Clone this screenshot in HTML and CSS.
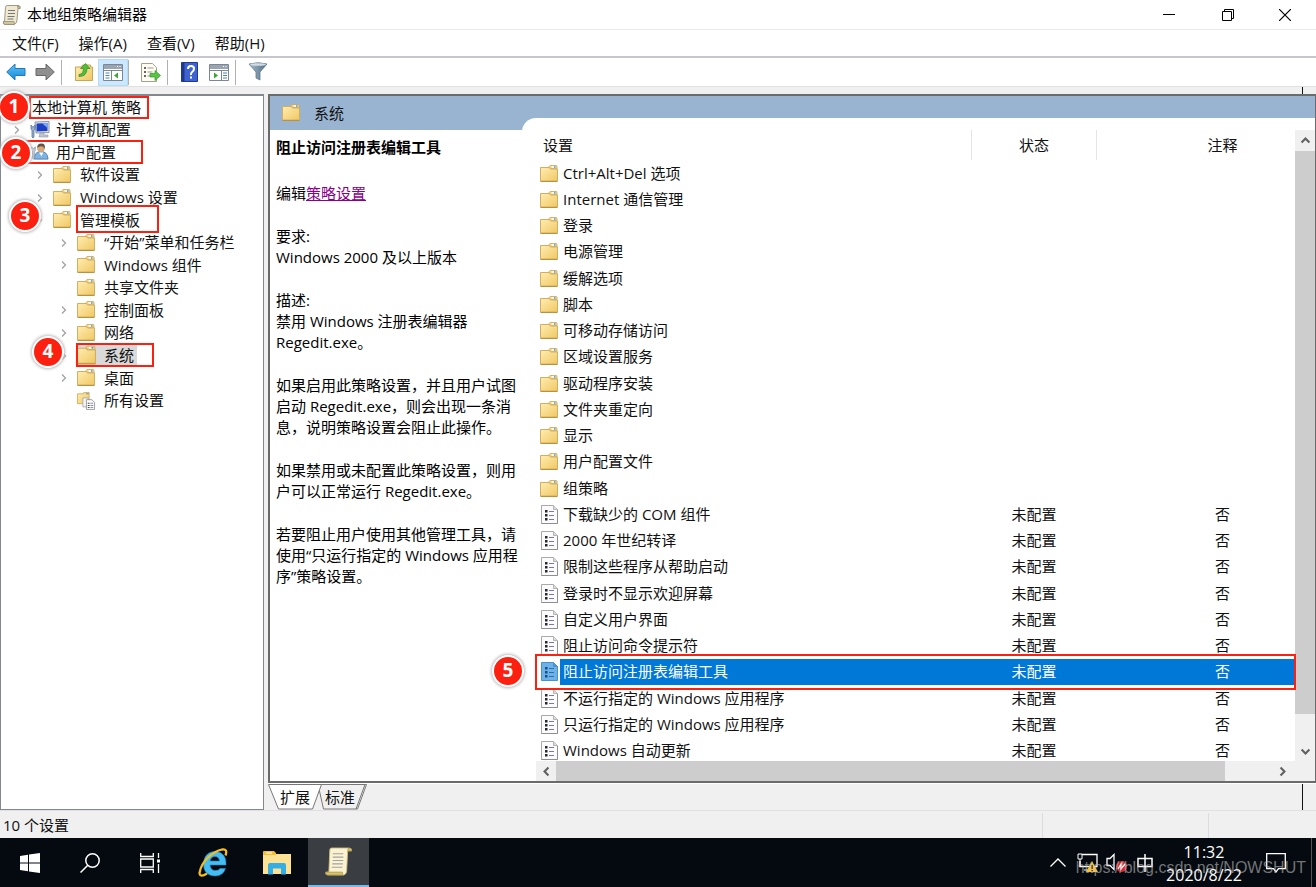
FILE: index.html
```html
<!DOCTYPE html>
<html lang="zh-CN">
<head>
<meta charset="utf-8">
<title>本地组策略编辑器</title>
<link rel="stylesheet" href="styles.css">
</head>
<body>
<svg class="defs" aria-hidden="true">
  <defs>
    <linearGradient id="gold" x1="0" y1="0" x2="1" y2="1"><stop offset="0" stop-color="#ffedb0"/><stop offset="1" stop-color="#f0c864"/></linearGradient>
    <linearGradient id="blue" x1="0" y1="0" x2="0" y2="1"><stop offset="0" stop-color="#5cc4f8"/><stop offset="1" stop-color="#1487d8"/></linearGradient>
    <linearGradient id="steel" x1="0" y1="0" x2="1" y2="0"><stop offset="0" stop-color="#a9bccb"/><stop offset="1" stop-color="#4f6b82"/></linearGradient>
  </defs>
  <symbol id="folder" viewBox="0 0 18 18">
    <path d="M9 3V1.500l1-1h6.500l.5 1V4z" fill="#f3d78b" stroke="#c9a657" stroke-width=".8"/>
    <path d="M11.500 2h4" stroke="#fff" stroke-width="1.600"/><path d="M14 2h1.500" stroke="#4a8fd0" stroke-width="1.600"/>
    <path d="M.5 2.500h8.500l1.500 1.500h7v12H.5z" fill="url(#gold)" stroke="#d2ae61"/>
    <path d="M.5 16.500h17" stroke="#b89143"/>
  </symbol>
  <symbol id="setting" viewBox="0 0 17 19">
    <path class="paper" d="M.5.500h12l4 4v14H.5z" stroke="#a9a9a9"/>
    <path d="M12.500.500v4h4" fill="#ddd" stroke="#b5b5b5"/>
    <path d="M.5 18.500h16V5" fill="none" stroke="#8e8e8e"/>
    <path d="M4 5h2.500v2.500H4zM4 9h2.500v2.500H4zM4 13h2.500v2.500H4z" fill="#26262c"/>
    <path d="M8 6.500h5M8 10.500h5M8 14.500h5" stroke="#7a78a8" stroke-width="1.200"/>
  </symbol>
  <symbol id="setting-sel" viewBox="0 0 17 19">
    <path d="M.5.500h12l4 4v14H.5z" fill="#6db1e6" stroke="#4a90cc"/>
    <path d="M12.500.500v4h4" fill="#4c97d6" stroke="#4a90cc"/>
    <path d="M4 5h2.500v2.500H4zM4 9h2.500v2.500H4zM4 13h2.500v2.500H4z" fill="#124f88"/>
    <path d="M8 6.500h5M8 10.500h5M8 14.500h5" stroke="#2a6db0" stroke-width="1.200"/>
  </symbol>
  <symbol id="scroll" viewBox="0 0 28 30">
    <path d="M5 3q0-2 2-2h18q3 0 2.500 3h-4l-1 20q0 4-3 5H3q-3 0-2-3h3z" fill="#fbf3cf" stroke="#c9bb80" stroke-width=".9"/>
    <path d="M24 1.500q4-.5 3.500 2.500h-4zM1 26h17q1 2 0 3H3q-3 0-2-3z" fill="#d9c36c" stroke="#a8913f" stroke-width=".7"/>
    <path d="M8 7h11M8 10.500h11M8 14h11M7.500 17.500h11M7 21h11" stroke="#a3a1a8" stroke-width="1.200"/>
  </symbol>
  <symbol id="scroll-small" viewBox="0 0 19 20">
    <path d="M3.500 2.500q0-2 2-2H17q1.500.5 1 3h-2L15 15q0 3-2.500 4.500H3q-2.500-.5-1.500-3h1z" fill="#efe9d2" stroke="#a09a84"/>
    <path d="M15.500 1q3-.5 2.500 2.500h-2zM1.500 16.500H12q1 1.500 0 3H3q-2.500-.5-1.500-3z" fill="#cfc49c" stroke="#8f886e" stroke-width=".7"/>
    <path d="M6 5.500h7M6 8.500h7M5.500 11.500h7M5.500 14h6" stroke="#77747a" stroke-width="1.100"/>
  </symbol>
  <symbol id="computer" viewBox="0 0 20 18">
    <path d="M5 1l14-.5v11L6 12z" fill="#e4e8ef" stroke="#8b93a3"/>
    <path d="M6.500 2.500l11-.5v8l-11 .5z" fill="#1d3fc4"/><path d="M12 2.200l5.500-.2v5z" fill="#7fa8f4"/>
    <path d="M10 12h4v2h4v2H9z" fill="#bfc6d2" stroke="#8b93a3" stroke-width=".6"/>
    <path d="M1 4q1 2 2 2t2-2v4L4 9v7q-1 2-2 0V9L1 8z" fill="#98b1cf" stroke="#4c6c96" stroke-width=".7"/>
  </symbol>
  <symbol id="user" viewBox="0 0 20 19">
    <path d="M4 17q0-8 7-8t7.500 8z" fill="#7fb3e3" stroke="#4f81b4"/>
    <path d="M9 10l2.500 4 2-4z" fill="#fff"/>
    <circle cx="11" cy="5.500" r="4" fill="#d9a878"/><path d="M7 5q0-4.500 4.500-4.500T15 6q-2-3-4-2.500T7 5z" fill="#655042"/>
    <path d="M1 4q1 2 2 2t2-2v4L4 9v7q-1 2-2 0V9L1 8z" fill="#c7d3e2" stroke="#6e86a5" stroke-width=".7"/>
  </symbol>
  <symbol id="allset" viewBox="0 0 20 20">
    <path d="M.5 2h7V.5h6V13H.5z" fill="url(#gold)" stroke="#d2ae61"/><path d="M10 2h3" stroke="#4a8fd0"/>
    <path d="M6.500 6.500h6v10h-6z" fill="#f4f4f4" stroke="#a9a9a9"/>
    <path d="M10.500 8.500h6l3 3v8h-9z" fill="#fbfbfb" stroke="#999"/>
    <path d="M12 12.500h2M12 15h2M12 17.300h2" stroke="#333"/><path d="M15 12.500h3M15 15h3M15 17.300h3" stroke="#7a78a8"/>
  </symbol>
  <symbol id="chev" viewBox="0 0 6 10"><path d="M1 1.500L4.500 5 1 8.500" fill="none" stroke="#a2a2a2" stroke-width="1.300"/></symbol>
  <symbol id="arrow" viewBox="0 0 10 10"><path d="M2 6.500l3-3 3 3" fill="none" stroke="#606060" stroke-width="1.600"/></symbol>
</svg>

<main class="window">
  <header class="titlebar">
    <svg class="app-icon"><use href="#scroll-small"/></svg>
    <h1>本地组策略编辑器</h1>
    <button class="win-btn" aria-label="最小化"><svg width="12" height="12"><path d="M0 5.500h12" stroke="#000"/></svg></button>
    <button class="win-btn" aria-label="还原"><svg width="12" height="12"><path d="M.5 2.500h9v9h-9zM2.500 2V.5h9v9H10" fill="none" stroke="#000"/></svg></button>
    <button class="win-btn" aria-label="关闭"><svg width="12" height="12"><path d="M0 0l12 12M12 0L0 12" stroke="#000" stroke-width="1.200"/></svg></button>
  </header>

  <nav class="menubar">
    <button>文件(F)</button><button>操作(A)</button><button>查看(V)</button><button>帮助(H)</button>
  </nav>

  <div class="toolbar" role="toolbar">
    <button aria-label="后退"><svg width="20" height="18"><path d="M.7 9L9 1v4.500h10v7H9V17z" fill="url(#blue)" stroke="#2478b5"/></svg></button>
    <button aria-label="前进"><svg width="20" height="18"><path d="M19.300 9L11 1v4.500H1v7h10V17z" fill="#909090" stroke="#686868"/></svg></button>
    <i class="sep"></i>
    <button aria-label="上移"><svg width="18" height="18"><path d="M.5 4h6l1-2h8v2h2v13.500H.5z" fill="url(#gold)" stroke="#c9a657"/><path d="M4 11.500q4.500-.5 4.500-6H5.500L10.500.5l4.500 5h-3q0 8-8 8z" fill="#4fbf3a" stroke="#2e8b22" stroke-width=".7"/></svg></button>
    <button class="on" aria-label="显示树"><svg width="20" height="17"><path d="M.5.500h19v16H.5z" fill="#fff" stroke="#7b8794"/><path d="M1 1h18v4H1z" fill="#9aa5b1"/><path d="M14 2.500h1M16.500 2.500h1" stroke="#fff"/><path d="M1 6.500h18M8.500 7v9" stroke="#7b8794"/><path d="M2.500 9h4M2.500 11.500h4M2.500 14h4" stroke="#4c7fb8"/><path d="M15 8.500v6L11 11.500z" fill="#38a832"/></svg></button>
    <i class="sep tight"></i>
    <button aria-label="导出"><svg width="20" height="19"><path d="M.5.500h11l4 4v14H.5z" fill="#fffdf1" stroke="#a3a08f"/><path d="M3 5h2M3 9h2M3 13h2" stroke="#333" stroke-width="1.400"/><path d="M6.500 5h6M6.500 9h5M6.500 13h3" stroke="#99969b" stroke-width="1.200"/><path d="M9 10.500h5V7.500l5.500 5-5.500 5V14H9z" fill="#57c443" stroke="#369c2a" stroke-width=".7"/></svg></button>
    <i class="sep"></i>
    <button aria-label="帮助"><svg width="18" height="20"><path d="M.5.500h16v19H.5z" fill="#3e62d2" stroke="#20398e"/><path d="M1 1h2.500v18H1z" fill="#1e388d"/><path d="M7 7q0-3 3-3t3 2.700q0 1.700-1.700 3T10 13" fill="none" stroke="#fff" stroke-width="2"/><path d="M9 14.500h2v2H9z" fill="#fff"/></svg></button>
    <button aria-label="显示操作窗格"><svg width="20" height="17"><path d="M.5.500h19v16H.5z" fill="#fff" stroke="#7b8794"/><path d="M1 1h18v4H1z" fill="#9aa5b1"/><path d="M14 2.500h1M16.500 2.500h1" stroke="#fff"/><path d="M1 6.500h18M12.500 7v9" stroke="#7b8794"/><path d="M14 9h4M14 11.500h4M14 14h4" stroke="#4c7fb8"/><path d="M5 8.500v6l4-3z" fill="#38a832"/></svg></button>
    <i class="sep"></i>
    <button aria-label="筛选器"><svg width="20" height="20"><path d="M1 2q9-2.500 18 0l-7 8v8l-4-2v-6z" fill="url(#steel)" stroke="#5f7890" stroke-width=".8"/><ellipse cx="10" cy="2.500" rx="8" ry="1.300" fill="#d2dce4"/></svg></button>
  </div>

  <div class="body">
    <section class="tree" aria-label="控制台树">
      <ul>
        <li class="root"><span>本地计算机 策略</span></li>
        <li class="l1"><svg class="tw"><use href="#chev"/></svg><svg class="ic"><use href="#computer"/></svg><span>计算机配置</span></li>
        <li class="l1"><svg class="tw"></svg><svg class="ic"><use href="#user"/></svg><span>用户配置</span></li>
        <li class="l2"><svg class="tw"><use href="#chev"/></svg><svg class="ic"><use href="#folder"/></svg><span>软件设置</span></li>
        <li class="l2"><svg class="tw"><use href="#chev"/></svg><svg class="ic"><use href="#folder"/></svg><span>Windows 设置</span></li>
        <li class="l2"><svg class="tw"><use href="#chev"/></svg><svg class="ic"><use href="#folder"/></svg><span>管理模板</span></li>
        <li class="l3"><svg class="tw"><use href="#chev"/></svg><svg class="ic"><use href="#folder"/></svg><span>“开始”菜单和任务栏</span></li>
        <li class="l3"><svg class="tw"><use href="#chev"/></svg><svg class="ic"><use href="#folder"/></svg><span>Windows 组件</span></li>
        <li class="l3"><svg class="tw"></svg><svg class="ic"><use href="#folder"/></svg><span>共享文件夹</span></li>
        <li class="l3"><svg class="tw"><use href="#chev"/></svg><svg class="ic"><use href="#folder"/></svg><span>控制面板</span></li>
        <li class="l3"><svg class="tw"><use href="#chev"/></svg><svg class="ic"><use href="#folder"/></svg><span>网络</span></li>
        <li class="l3 current"><svg class="tw"><use href="#chev"/></svg><svg class="ic"><use href="#folder"/></svg><span>系统</span></li>
        <li class="l3"><svg class="tw"><use href="#chev"/></svg><svg class="ic"><use href="#folder"/></svg><span>桌面</span></li>
        <li class="l3"><svg class="tw"></svg><svg class="ic"><use href="#allset"/></svg><span>所有设置</span></li>
      </ul>
      <i class="box b1"></i><i class="box b2"></i><i class="box b3"></i><i class="box b4"></i>
      <b class="num n1">1</b><b class="num n2">2</b><b class="num n3">3</b><b class="num n4">4</b>
    </section>

    <section class="right">
      <div class="pane">
        <div class="info">
          <h2><svg class="fic"><use href="#folder"/></svg>系统</h2>
          <div class="desc">
            <h3>阻止访问注册表编辑工具</h3>
            <p>编辑<a href="#policy">策略设置</a></p>
            <p>要求:<br>Windows 2000 及以上版本</p>
            <p>描述:<br>禁用 Windows 注册表编辑器<br>Regedit.exe。</p>
            <p>如果启用此策略设置，并且用户试图<br>启动 Regedit.exe，则会出现一条消<br>息，说明策略设置会阻止此操作。</p>
            <p>如果禁用或未配置此策略设置，则用<br>户可以正常运行 Regedit.exe。</p>
            <p>若要阻止用户使用其他管理工具，请<br>使用“只运行指定的 Windows 应用程<br>序”策略设置。</p>
          </div>
        </div>
        <div class="list">
          <div class="view">
            <table>
              <colgroup><col><col class="c2"><col class="c3"></colgroup>
              <thead><tr><th>设置</th><th>状态</th><th>注释</th></tr></thead>
              <tbody>
                <tr><td><svg class="fic"><use href="#folder"/></svg>Ctrl+Alt+Del 选项</td><td></td><td></td></tr>
                <tr><td><svg class="fic"><use href="#folder"/></svg>Internet 通信管理</td><td></td><td></td></tr>
                <tr><td><svg class="fic"><use href="#folder"/></svg>登录</td><td></td><td></td></tr>
                <tr><td><svg class="fic"><use href="#folder"/></svg>电源管理</td><td></td><td></td></tr>
                <tr><td><svg class="fic"><use href="#folder"/></svg>缓解选项</td><td></td><td></td></tr>
                <tr><td><svg class="fic"><use href="#folder"/></svg>脚本</td><td></td><td></td></tr>
                <tr><td><svg class="fic"><use href="#folder"/></svg>可移动存储访问</td><td></td><td></td></tr>
                <tr><td><svg class="fic"><use href="#folder"/></svg>区域设置服务</td><td></td><td></td></tr>
                <tr><td><svg class="fic"><use href="#folder"/></svg>驱动程序安装</td><td></td><td></td></tr>
                <tr><td><svg class="fic"><use href="#folder"/></svg>文件夹重定向</td><td></td><td></td></tr>
                <tr><td><svg class="fic"><use href="#folder"/></svg>显示</td><td></td><td></td></tr>
                <tr><td><svg class="fic"><use href="#folder"/></svg>用户配置文件</td><td></td><td></td></tr>
                <tr><td><svg class="fic"><use href="#folder"/></svg>组策略</td><td></td><td></td></tr>
                <tr><td><svg class="sic"><use href="#setting"/></svg>下载缺少的 COM 组件</td><td>未配置</td><td>否</td></tr>
                <tr><td><svg class="sic"><use href="#setting"/></svg>2000 年世纪转译</td><td>未配置</td><td>否</td></tr>
                <tr><td><svg class="sic"><use href="#setting"/></svg>限制这些程序从帮助启动</td><td>未配置</td><td>否</td></tr>
                <tr><td><svg class="sic"><use href="#setting"/></svg>登录时不显示欢迎屏幕</td><td>未配置</td><td>否</td></tr>
                <tr><td><svg class="sic"><use href="#setting"/></svg>自定义用户界面</td><td>未配置</td><td>否</td></tr>
                <tr><td><svg class="sic"><use href="#setting"/></svg>阻止访问命令提示符</td><td>未配置</td><td>否</td></tr>
                <tr class="sel"><td><svg class="sic"><use href="#setting-sel"/></svg>阻止访问注册表编辑工具</td><td>未配置</td><td>否</td></tr>
                <tr><td><svg class="sic"><use href="#setting"/></svg>不运行指定的 Windows 应用程序</td><td>未配置</td><td>否</td></tr>
                <tr><td><svg class="sic"><use href="#setting"/></svg>只运行指定的 Windows 应用程序</td><td>未配置</td><td>否</td></tr>
                <tr><td><svg class="sic"><use href="#setting"/></svg>Windows 自动更新</td><td>未配置</td><td>否</td></tr>
              </tbody>
            </table>
          </div>
          <div class="vbar"><button aria-label="向上滚动"><svg class="ar"><use href="#arrow"/></svg></button><i class="thumb"></i><button aria-label="向下滚动"><svg class="ar down"><use href="#arrow"/></svg></button></div>
          <div class="hbar"><button aria-label="向左滚动"><svg class="ar left"><use href="#arrow"/></svg></button><i class="thumb"></i><button aria-label="向右滚动"><svg class="ar rt"><use href="#arrow"/></svg></button></div>
        </div>
        <i class="box b5"></i><b class="num n5">5</b>
      </div>
      <div class="tabs">
        <svg class="tabshape" width="100" height="26"><path d="M50 .5L55.500 25h34L98.500.5z" fill="#f0f0f0" stroke="#777"/><path d="M97 .5L88 25" stroke="#777"/><path d="M.5.500L10.500 25h34L53.500.5z" fill="#fff" stroke="#777"/></svg>
        <button>扩展</button><button>标准</button>
      </div>
    </section>
  </div>

  <footer class="status"><span>10 个设置</span><i></i><i></i></footer>
</main>

<nav class="taskbar">
  <button aria-label="开始"><svg width="20" height="20"><path d="M0 3l8-1.200V9.500H0zM9 1.600L20 0v9.500H9zM0 10.500h8v7.700L0 17zM9 10.500h11V20L9 18.400z" fill="#fff"/></svg></button>
  <button aria-label="搜索"><svg width="20" height="20"><circle cx="12.500" cy="7.500" r="6.700" fill="none" stroke="#fff" stroke-width="1.500"/><path d="M7.800 12.300L.5 19.500" stroke="#fff" stroke-width="1.500"/></svg></button>
  <button aria-label="任务视图"><svg width="21" height="20"><path d="M.7 0v3.500h12.600V0M.7 20v-3.500h12.600V20M.7 6h12.600v8H.7zM18.500 0v5M18.500 11v9" fill="none" stroke="#fff" stroke-width="1.300"/><path d="M17 6.500h3v3h-3z" fill="#fff"/></svg></button>
  <button aria-label="Internet Explorer"><svg width="30" height="30" viewBox="0 0 30 30"><path d="M28 17H12q.5 5.500 5.500 5.500 3.500 0 4.500-2h5.500Q25 28 17 28 5.500 27.500 5.500 16 6 4 17 3.500 28.500 4 28 17zM12 13h9.500q-.5-4.500-4.500-4.500T12 13z" fill="#45bdf2" fill-rule="evenodd" stroke="#1d8fd0" stroke-width=".6"/><path d="M27.500 7.500Q30 .5 24 1.500 17 3 10 9.500T1.500 25q.5 5 7.500.5" fill="none" stroke="#f5bd20" stroke-width="2.300"/></svg></button>
  <button aria-label="文件资源管理器"><svg width="28" height="24"><path d="M0 1h11l2 2h15v20H0z" fill="#fde293"/><path d="M0 4V1q0-1 1-1h10l2 2v2z" fill="#f6c02e"/><path d="M3 2h6" stroke="#fff"/><path d="M5 23.500V14q0-2 2-2h14q2 0 2 2v9.500h-5v-6H10v6z" fill="#35aee5"/></svg></button>
  <button class="active" aria-label="本地组策略编辑器"><svg width="27" height="29"><use href="#scroll"/></svg></button>
  <div class="tray">
    <svg class="caret" width="16" height="9"><path d="M.5 8.500L8 1l7.500 7.500" fill="none" stroke="#fff" stroke-width="1.300"/></svg>
    <svg width="22" height="20"><path d="M5 1.500h15v12H3V8" fill="none" stroke="#fff" stroke-width="1.300"/><path d="M1 1h4v5H1zM3 6v8M7 17h5" fill="none" stroke="#fff"/><path d="M15 8l6 11H9z" fill="#f9c22c"/><path d="M15 12v4M15 17v1.300" stroke="#222" stroke-width="1.400"/></svg>
    <svg width="22" height="20"><path d="M1 5.500h3l4-4v15l-4-4H1z" fill="none" stroke="#fff" stroke-width="1.300"/><circle cx="15.500" cy="13.500" r="5.500" fill="#d5252d"/><path d="M12 16l3-5v5l4-5" fill="none" stroke="#fff" stroke-width="1.300"/></svg>
    <svg class="ime" width="16" height="18"><path d="M8 0v18M1 4.500h14v8H1z" fill="none" stroke="#fff" stroke-width="1.500"/></svg>
    <time><span>11:32</span><span>2020/8/22</span></time>
    <svg class="note" width="20" height="20"><path d="M.7.700h18.600v15H12.500L10 19l-2.500-3.300H.7z" fill="none" stroke="#fff" stroke-width="1.300"/></svg>
    <i class="peek"></i>
  </div>
  <span class="mark">https://blog.csdn.net/NOWSHUT</span>
</nav>
</body>
</html>
```
FILE: styles.css
```css
* { box-sizing: border-box; }
body {
  margin: 0;
  min-height: 100vh;
  display: flex;
  flex-direction: column;
  overflow: hidden;
  background: #f0f0f0;
  color: #111;
  font: 15px/21px "Open Sans", "Noto Sans CJK SC", sans-serif;
}
button { padding: 0; border: 0; background: none; color: inherit; font: inherit; }
h1, h2, h3, p, ul { margin: 0; padding: 0; font-weight: 400; font-size: inherit; }
svg { display: block; flex: none; }
.defs { position: absolute; width: 0; height: 0; }
.paper { fill: #fbfbfb; }

.window { flex: 1; display: flex; flex-direction: column; }
.titlebar { display: flex; align-items: center; height: 30px; padding-left: 2px; background: #fff; border-bottom: 1px solid #ebebeb; }
.app-icon { width: 19px; height: 20px; }
.titlebar h1 { flex: 1; margin-left: 6px; color: #000; }
.win-btn { display: grid; place-items: center; width: 59px; height: 28px; }
.win-btn:last-child { width: 57px; padding-right: 1px; }
.titlebar { padding-right: 2px; }

.menubar { display: flex; gap: 20px; height: 28px; padding-left: 12px; background: #fff; border-bottom: 2px solid #c6c6cc; }

.toolbar { display: flex; align-items: center; height: 29px; padding-left: 1px; background: #fff; border-bottom: 1px solid #e0e0e0; }
.toolbar button { display: grid; place-items: center; width: 29px; height: 27px; }
.toolbar .on { width: 30px; background: #cce8ff; border: 1px solid #b4dcfa; }
.toolbar .sep { width: 1px; height: 25px; margin: 0 7px 0 2px; background: #b0b0b0; }
.toolbar .tight { margin-left: 0; }

.body { flex: 1; display: flex; gap: 4px; padding-top: 7px; }
.tree { position: relative; width: 264px; background: #fff; border: 2px solid #828790; border-width: 2px 1px 1px; }
.tree ul { display: grid; grid-auto-rows: 1fr; height: 316px; list-style: none; }
.tree li { display: flex; align-items: center; white-space: nowrap; }
.tree .root { padding-left: 28px; }
.l1 { padding-left: 13px; }
.l2 { padding-left: 36px; }
.l3 { padding-left: 60px; }
.tw { width: 6px; height: 10px; margin-right: 10px; }
.ic { width: 23px; height: 18px; padding-right: 3px; }
.l2 .tw, .l3 .tw { margin-right: 9px; }
.l2 .ic, .l3 .ic { width: 25px; padding-right: 5px; }
.tree li span { padding: 0 3px; }
.current .ic, .current span { height: 21px; background: #d9d9d9; }

.box { position: absolute; border: 2px solid #fb2010; pointer-events: none; }
.b1 { left: 28px; top: 0; width: 120px; height: 23px; }
.b2 { left: 20px; top: 44px; width: 122px; height: 24px; }
.b3 { left: 75px; top: 109px; width: 83px; height: 28px; }
.b4 { left: 75px; top: 247px; width: 78px; height: 24px; }
.b5 { left: 265px; right: 19px; top: 558px; height: 36px; }
.num {
  position: absolute;
  width: 32px;
  height: 32px;
  border: 2px solid #fff;
  border-radius: 50%;
  background: #fb2010;
  box-shadow: 0 0 3px 1px #bbb;
  color: #fff;
  font: 700 19px/27px "Noto Sans", sans-serif;
  text-align: center;
}
.n1 { left: -3px; top: -5px; }
.n2 { left: -1px; top: 41px; }
.n3 { left: 8px; top: 104px; }
.n4 { left: 31px; top: 240px; }
.n5 { left: 222px; top: 559px; }

.right { flex: 1; min-width: 0; display: flex; flex-direction: column; }
.pane { position: relative; flex: 1; display: flex; background: #99b4d1; border: 2px solid #6b6b6b; border-width: 2px 1px 2px 2px; }
.info { width: 252px; display: flex; flex-direction: column; }
.info h2 { display: flex; align-items: center; gap: 14px; height: 34px; padding-left: 12px; }
.fic { width: 18px; height: 18px; }
.desc { flex: 1; padding: 7px 0 0 6px; background: #fff; white-space: nowrap; color: #000; }
.desc h3 { position: relative; z-index: 1; margin-bottom: 25px; font-weight: 700; }
.desc p { position: relative; z-index: 1; margin-bottom: 22px; }
.desc a { color: #8b008b; text-decoration: underline; }

.list {
  flex: 1;
  min-width: 0;
  display: grid;
  grid-template-columns: minmax(0, 1fr) 20px;
  grid-template-rows: minmax(0, 1fr) 20px;
  margin-top: 22px;
  padding: 12px 0 0 14px;
  background: #fff;
  border-radius: 14px 0 0 0;
}
.view { overflow: hidden; height: 631px; }
table { width: calc(100% + 54px); height: 634px; table-layout: fixed; border-collapse: collapse; }
.c2 { width: 125px; }
.c3 { width: 252px; }
th { height: 30px; padding: 0; font-weight: 400; border-right: 1px solid #e5e5e5; }
th:first-child { padding-left: 7px; text-align: left; }
td { height: 26px; padding: 0; text-align: center; white-space: nowrap; }
td:first-child { padding-left: 4px; text-align: left; }
td svg { display: inline-block; vertical-align: -4px; margin-right: 5px; }
.sic { width: 17px; height: 19px; margin-left: 1px; }
.sel td { color: #fff; background: #0078d7; }
.sel td:first-child { background: linear-gradient(90deg, #fff 24px, #0078d7 24px); }

.vbar, .hbar { display: flex; background: #f0f0f0; }
.vbar { flex-direction: column; }
.vbar button, .hbar button { display: grid; place-items: center; width: 20px; height: 20px; }
.thumb { background: #cdcdcd; }
.vbar .thumb { height: 563px; margin: 1px 0 auto; }
.hbar .thumb { flex: 1; margin-right: 47px; }
.list > .hbar { grid-column: 1 / 3; }
.hbar button:last-child { margin-right: 23px; }
.ar { width: 13px; height: 13px; }
.down { transform: rotate(180deg); }
.left { transform: rotate(-90deg); }
.rt { transform: rotate(90deg); }

.tabs { position: relative; display: flex; gap: 15px; height: 27px; padding-left: 12px; border-top: 1px solid #fff; }
.tabs button { position: relative; }
.tabshape { position: absolute; left: 0; top: 0; }

.body, .tabs { background: linear-gradient(#111, #111) right 13px top 0 / 1px 7px no-repeat; }
.tabs { background-size: 1px 27px; }

.status { display: flex; height: 28px; padding-left: 3px; border-top: 1px solid #e0e0e0; line-height: 29px; }
.status span { flex: 1; }
.status i { width: 166px; margin-top: 2px; border-left: 1px solid #dcdcdc; }
.status i:last-child { width: 108px; }

.taskbar { position: relative; display: flex; height: 49px; background: #050a10; color: #fff; }
.taskbar button { display: grid; place-items: center; width: 60px; height: 49px; }
.taskbar button:nth-child(4) { width: 66px; }
.taskbar button:nth-child(5) { width: 62px; }
.taskbar .active { width: 61px; background: #3a3d42; border-bottom: 2px solid #76b9ed; }
.tray { display: flex; align-items: center; margin-left: auto; gap: 7px; }
.tray .caret { margin-right: 4px; }
.ime { margin-left: 2px; }
.tray time { display: flex; flex-direction: column; align-items: center; width: 88px; padding-top: 2px; font-size: 16px; line-height: 23px; }
.note { margin: 0 18px 0 11px; }
.peek { width: 5px; height: 49px; border-left: 1px solid #555; }
.mark { position: absolute; right: 10px; bottom: 8px; color: rgba(190, 190, 190, 0.6); font: 16px/22px "Liberation Sans", sans-serif; }
```
